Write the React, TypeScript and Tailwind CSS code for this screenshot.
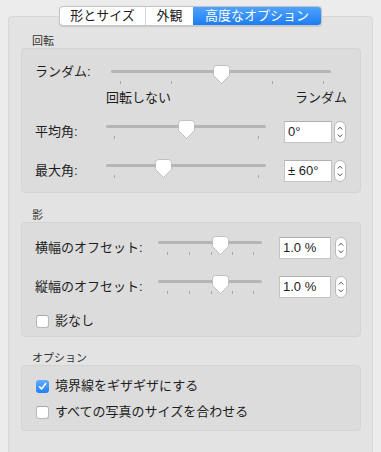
import React from 'react';

const Thumb = ({ left }: { left: number }) => (
  <svg
    className="absolute top-[-1px]"
    style={{ left }}
    width="17"
    height="20"
    viewBox="0 0 17 20"
  >
    <path
      d="M3.5 0.5 H13.5 Q16.5 0.5 16.5 3.5 V10.5 L8.5 18.5 L0.5 10.5 V3.5 Q0.5 0.5 3.5 0.5 Z"
      fill="#ffffff"
      stroke="#b4b4b4"
      strokeWidth="0.8"
    />
  </svg>
);

interface SliderProps {
  className: string;
  thumb: number;
  ticks: number[];
}

const Slider: React.FC<SliderProps> = ({ className, thumb, ticks }) => (
  <div className={`relative h-[22px] shrink-0 ${className}`}>
    <div className="absolute left-0 right-0 top-[4px] h-[3px] rounded-full bg-[#b5b5b5]" />
    {ticks.map((t) => (
      <div key={t} className="absolute top-[15px] h-[3px] w-px bg-[#a8a8a8]" style={{ left: t }} />
    ))}
    <Thumb left={thumb - 8.5} />
  </div>
);

const Stepper = () => (
  <svg width="12" height="22" viewBox="0 0 12 22" className="shrink-0">
    <rect x="0.5" y="0.5" width="11" height="21" rx="5.5" fill="#ffffff" stroke="#b9b9b9" />
    <path d="M3.8 8.5 L6 6.2 L8.2 8.5" fill="none" stroke="#4a4a4a" strokeWidth="1" />
    <path d="M3.8 13.5 L6 15.8 L8.2 13.5" fill="none" stroke="#4a4a4a" strokeWidth="1" />
  </svg>
);

const Field = ({ value, className }: { value: string; className: string }) => (
  <div
    className={`h-[22px] shrink-0 border border-[#c4c4c4] border-t-[#b0b0b0] bg-white pl-[3px] text-[13px] leading-[20px] text-[#1d1d1d] ${className}`}
  >
    {value}
  </div>
);

const Checkbox = ({ checked, label }: { checked?: boolean; label: string }) => (
  <div className="flex h-[16px] items-center gap-[6px] pl-[14px]">
    {checked ? (
      <div className="flex h-[13px] w-[13px] items-center justify-center rounded-[3px] bg-gradient-to-b from-[#62acfb] to-[#1f80f5]">
        <svg width="9" height="9" viewBox="0 0 9 9">
          <path d="M1.5 4.8 L3.6 7 L7.6 1.6" fill="none" stroke="#ffffff" strokeWidth="1.6" strokeLinecap="round" strokeLinejoin="round" />
        </svg>
      </div>
    ) : (
      <div className="h-[13px] w-[13px] rounded-[3px] border border-[#b8b8b8] border-t-[#a9a9a9] bg-white" />
    )}
    <span className="text-[13px] leading-[16px] text-[#1d1d1d]">{label}</span>
  </div>
);

const SectionLabel = ({ children }: { children: React.ReactNode }) => (
  <div className="h-[13px] pl-[11px] text-[11px] leading-[13px] text-[#333333]">{children}</div>
);

export default function App() {
  return (
    <div className="h-[452px] w-[381px] overflow-hidden bg-[#ececec] font-['Liberation_Sans','Noto_Sans_CJK_JP',sans-serif]">
      {/* Tabs */}
      <div className="relative z-10 flex justify-center pt-[6px]">
        <div className="flex h-[20px] w-[263px] overflow-hidden rounded-[4px] border border-[#c4c4c4] bg-white text-[13px] leading-[18px] text-[#1d1d1d] shadow-[0_0.5px_1px_rgba(0,0,0,0.12)]">
          <div className="w-[86px] border-r border-[#d4d4d4] text-center">形とサイズ</div>
          <div className="w-[47px] text-center">外観</div>
          <div className="flex-1 bg-gradient-to-b from-[#4ea2fd] to-[#1c7cf3] text-center text-white">高度なオプション</div>
        </div>
      </div>

      {/* Panel */}
      <div className="-mt-[10px] ml-[8px] h-[446px] w-[365px] rounded-[4px] border border-[#d8d8d8] bg-[#e3e3e3] pl-[12px] pr-[11px] pt-[18px]">
        <SectionLabel>回転</SectionLabel>
        <div className="rounded-[4px] border border-[#d4d4d4] bg-[#dcdcdc] pb-[10px] pl-[13px] pr-[13px] pt-[12px]">
          <div className="flex items-start">
            <div className="w-[76px] text-[13px] leading-[22px] text-[#1d1d1d]">ランダム:</div>
            <Slider className="mt-[5px] w-[220px]" thumb={110} ticks={[9, 60, 110, 161, 212]} />
          </div>
          <div className="mt-[2px] flex h-[16px] justify-between pl-[71px] text-[13px] leading-[16px] text-[#1d1d1d]">
            <span>回転しない</span>
            <span>ランダム</span>
          </div>
          <div className="mt-[15px] flex items-start">
            <div className="w-[71px] text-[13px] leading-[22px] text-[#1d1d1d]">平均角:</div>
            <Slider className="w-[160px]" thumb={80} ticks={[8, 80, 152]} />
            <Field className="ml-[18px] w-[48px]" value="0°" />
            <div className="ml-[2px]"><Stepper /></div>
          </div>
          <div className="mt-[17px] flex items-start">
            <div className="w-[71px] text-[13px] leading-[22px] text-[#1d1d1d]">最大角:</div>
            <Slider className="w-[160px]" thumb={57} ticks={[8, 152]} />
            <Field className="ml-[18px] w-[48px]" value="± 60°" />
            <div className="ml-[2px]"><Stepper /></div>
          </div>
        </div>

        <div className="mt-[16px]">
          <SectionLabel>影</SectionLabel>
        </div>
        <div className="rounded-[4px] border border-[#d4d4d4] bg-[#dcdcdc] pb-[7px] pl-[13px] pr-[13px] pt-[14px]">
          <div className="flex items-start">
            <div className="w-[123px] text-[13px] leading-[22px] text-[#1d1d1d]">横幅のオフセット:</div>
            <Slider className="w-[104px]" thumb={62} ticks={[9, 31, 53, 74, 95]} />
            <Field className="ml-[17px] w-[52px]" value="1.0 %" />
            <div className="ml-[4px]"><Stepper /></div>
          </div>
          <div className="mt-[17px] flex items-start">
            <div className="w-[123px] text-[13px] leading-[22px] text-[#1d1d1d]">縦幅のオフセット:</div>
            <Slider className="w-[104px]" thumb={62} ticks={[9, 31, 53, 74, 95]} />
            <Field className="ml-[17px] w-[52px]" value="1.0 %" />
            <div className="ml-[4px]"><Stepper /></div>
          </div>
          <div className="-ml-[13px] mt-[15px]">
            <Checkbox label="影なし" />
          </div>
        </div>

        <div className="mt-[15px]">
          <SectionLabel>オプション</SectionLabel>
        </div>
        <div className="rounded-[4px] border border-[#d4d4d4] bg-[#dcdcdc] pb-[10px] pt-[12px]">
          <Checkbox checked label="境界線をギザギザにする" />
          <div className="mt-[10px]">
            <Checkbox label="すべての写真のサイズを合わせる" />
          </div>
        </div>
      </div>
    </div>
  );
}
